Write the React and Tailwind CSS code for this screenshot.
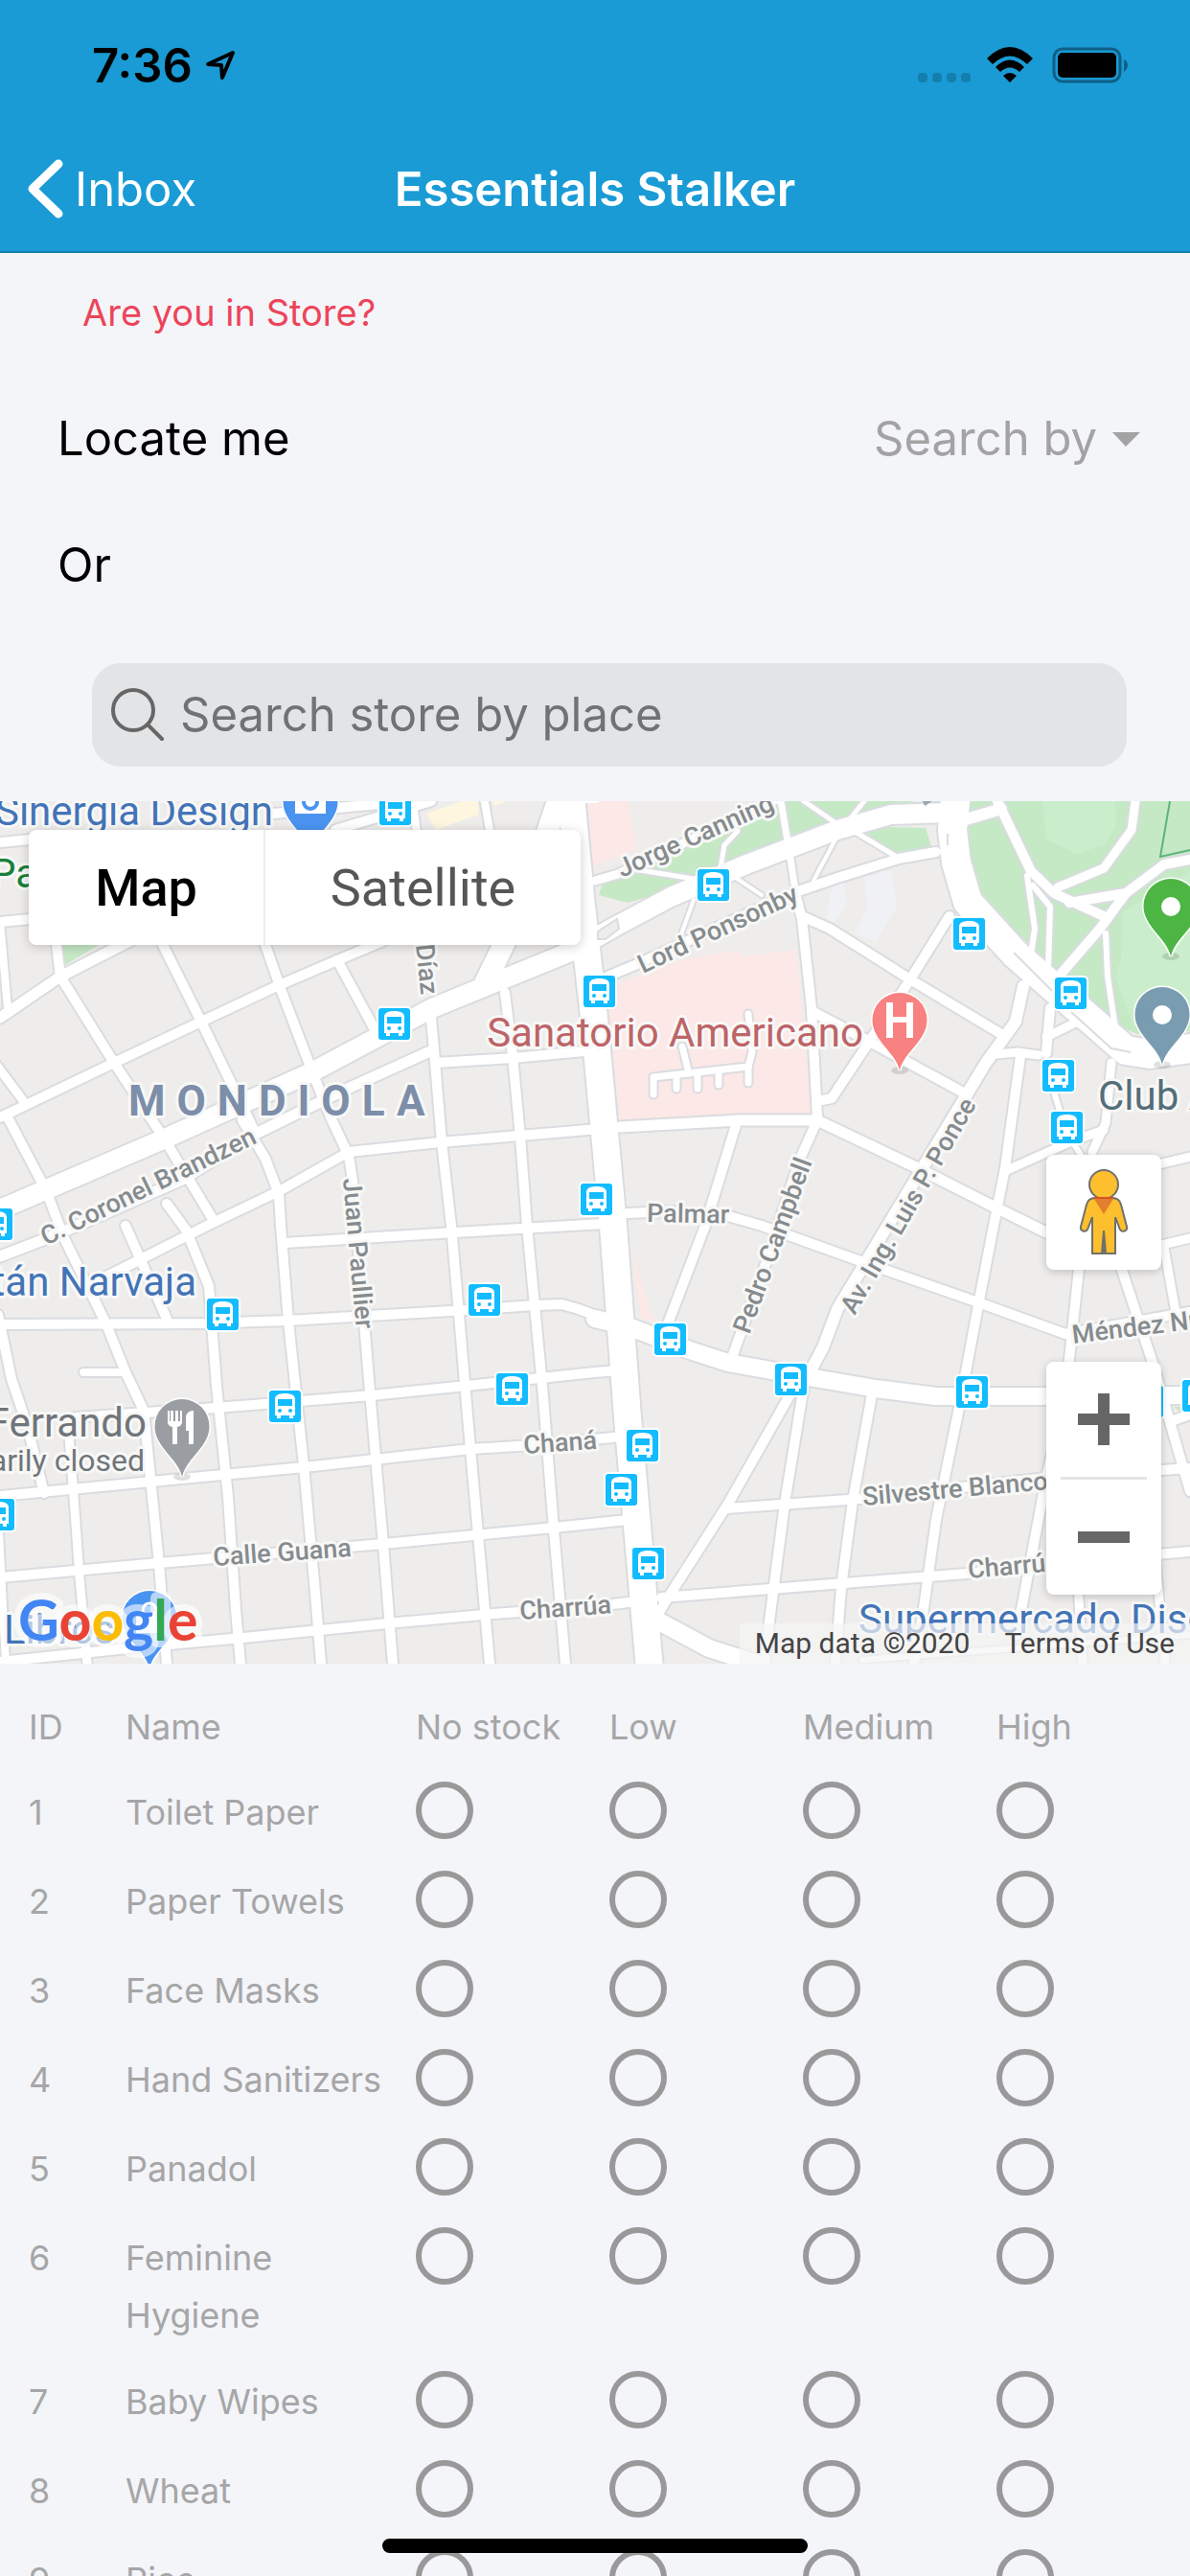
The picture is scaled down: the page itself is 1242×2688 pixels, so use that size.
import React, { useState } from 'react';

const items = [
  'Toilet Paper',
  'Paper Towels',
  'Face Masks',
  'Hand Sanitizers',
  'Panadol',
  'Feminine Hygiene',
  'Baby Wipes',
  'Wheat',
  'Rice'
];

const levels = ['No stock', 'Low', 'Medium', 'High'];

const areas = [
  // parks
  { fill: '#c5e8c5', points: '629,86 672,73 724,80 700,93 655,106 625,98' },
  { fill: '#c5e8c5', points: '672,67 750,33 815,0 955,0 926,8 874,24 780,62 731,82' },
  { fill: '#c5e8c5', points: '894,33 926,27 966,28 973,50 934,55' },
  { fill: '#c5e8c5', points: '975,0 997,0 997,17 975,17' },
  { fill: '#c5e8c5', points: '1013,0 1242,0 1242,240 1187,243 1164,233 1132,213 1100,176 1068,143 1017,100 1009,66 1007,33' },
  { fill: '#caeecb', points: '1088,0 1164,0 1165,26 1152,46 1124,55 1092,40' },
  { fill: '#caeecb', points: '1171,116 1242,73 1242,236 1183,236 1164,183 1170,165' },
  { fill: '#c5e8c5', points: '64,140 120,140 66,172' },
  { fill: '#c5e8c5', points: '1225,632 1240,632 1236,640' },
  // hospital blocks
  { fill: '#fce8e6', points: '645,190 708,166 770,156 775,162 831,155 847,326 783,326 647,333 635,216' },
  { fill: '#fce8e6', points: '614,0 655,0 665,50 618,68' },
  { fill: '#fce8e6', points: '659,466 682,543 669,540' },
  // others
  { fill: '#fef6de', points: '445,13 499,-6 499,14 455,30' },
  { fill: '#fef6de', points: '514,0 528,0 516,5' },
  { fill: '#eff1f4', points: '868,90 880,84 884,108 872,126 862,124' },
  { fill: '#eff1f4', points: '902,80 930,72 936,110 914,147 892,138 905,112' }
];

// [width, points]
const roads = [
  // footpaths
  [5, '839,0 874,24'],
  [5, '894,33 934,57'],
  [5, '902,0 886,20'],
  [4, '874,36 849,83'],
  [5, '770,31 756,46 752,70'],
  [5, '668,72 730,82'],
  [4, '768,80 795,98'],
  [4, '724,103 712,136'],
  [6, '1072,78 1080,133 1076,160'],
  [6, '1078,88 1096,110 1094,175'],
  [6, '1154,138 1156,183 1164,236'],
  [6, '1100,303 1112,343 1132,376'],
  [7, '815,0 825,60 831,100'],
  // park roads
  [10, '1041,0 1076,73 1100,96 1156,122'],
  [9, '1185,0 1181,30 1152,70 1104,90'],
  [10, '1242,61 1215,66 1175,96 1116,106'],
  [10, '1175,96 1148,133 1104,184'],
  [12, '1005,20 1045,8'],
  // streets east of the avenue
  [9, '621,83 645,76 815,-4'],
  [10, '629,185 665,170 827,96 874,80 938,60 977,53'],
  [10, '831,100 837,123 847,216 853,330'],
  [10, '837,120 866,133 950,186 1045,243'],
  [10, '991,120 950,186 906,253 868,310 853,313'],
  [10, '849,220 906,250 1009,306'],
  [12, '1068,193 1060,230 1029,273 1009,306 874,530 859,570 843,600'],
  [10, '827,615 760,733 696,833 680,860'],
  [9, '1040,264 1062,262 1084,265'],
  [10, '1096,216 1092,263'],
  [9, '1092,246 1125,230'],
  [10, '1065,266 1049,383 1037,443 1021,526 1001,633 977,750 962,856 954,900'],
  [9, '1160,273 1154,336 1140,366'],
  [9, '1049,386 1116,356 1152,343'],
  [11, '647,340 771,333 853,333'],
  [10, '768,338 736,443 696,548'],
  [10, '853,333 835,373 800,480 762,586'],
  [11, '853,333 958,383 1037,423 1092,450'],
  [10, '655,430 700,428 760,433 795,443 898,480 1021,523 1112,556 1242,533'],
  [9, '1130,398 1242,371'],
  [9, '1200,466 1242,456'],
  [9, '1215,466 1227,533'],
  [10, '1130,450 1112,620 1092,706 1061,870'],
  [10, '1158,450 1203,586 1242,720'],
  [10, '911,613 890,730 878,820 872,900'],
  [10, '839,610 819,733 803,856 798,900'],
  [10, '760,738 898,728 1092,706 1242,696'],
  [10, '690,831 1009,806 1092,796 1242,783'],
  [10, '1242,640 1225,646'],
  [9, '1124,800 1130,900'],
  [9, '1203,760 1216,900'],
  [6, '900,896 1242,870'],
  [18, '686,855 740,884 790,900'],
  // western grid, north to south
  [10, '253,333 277,373 291,410 293,443 301,543 317,693 329,826 335,900'],
  [10, '174,420 194,447 218,506 226,610 238,726 246,843 251,900'],
  [10, '131,443 174,540'],
  [10, '277,150 293,196 325,280 345,330 364,370 368,396 380,543 386,616 400,776 410,900'],
  [10, '449,216 453,260 461,356 471,443 491,676 511,900'],
  [10, '527,200 535,266 543,350 550,443 566,610 578,760 590,900'],
  [10, '8,330 48,406 67,456 111,546 131,596 150,636 158,716 166,796 174,900'],
  [9, '71,650 77,726 83,810 91,900'],
  [10, '-2,536 12,603 28,650 46,722'],
  [8, '-1,763 6,900'],
  [8, '87,596 127,596'],
  [10, '59,150 63,183 119,273 170,350 222,436'],
  [10, '170,150 210,230 265,343'],
  [10, '352,166 392,240'],
  [9, '-4,275 26,315'],
  [8, '0,126 8,216'],
  // western grid, west to east
  [10, '0,546 214,545 300,542 487,531 558,526 586,525 604,530 640,544'],
  [10, '297,461 475,450 630,441'],
  [10, '364,366 459,356 625,342'],
  [10, '455,273 535,268 620,260'],
  [10, '79,643 226,633 388,620 487,610 621,596 645,594'],
  [10, '0,725 158,710 317,695 491,676 555,672 650,663'],
  [10, '0,810 166,795 400,775 578,758 655,750'],
  [10, '0,898 143,883 253,873 404,858 515,848 621,840 665,835'],
  [11, '451,260 356,303 269,346 190,395 60,452 0,475'],
  [10, '364,366 293,406 222,440 190,456 143,480 107,498'],
  [11, '0,226 63,183 135,146'],
  [10, '0,330 119,273 210,230 289,193 352,166 400,146'],
  [10, '0,43 32,40'],
  [10, '0,126 32,123'],
  [10, '285,13 396,3'],
  [10, '350,30 450,0'],
  [8, '505,-4 511,30'],
  [8, '432,10 436,40'],
  // hospital driveways
  [7, '682,306 682,288 781,277 785,262 781,222'],
  [7, '706,286 706,300'],
  [7, '728,284 728,300'],
  [7, '750,282 750,296'],
  [7, '781,277 781,294'],
  [7, '719,284 712,256'],
  // avenues
  [20, '0,426 170,353 325,283 451,216 598,156 640,132 700,100 779,66 874,30 930,14 989,12'],
  [22, '506,190 545,110 582,0'],
  [18, '621,540 661,550 720,573 760,586 827,598 914,613 977,621 1092,621 1242,620'],
  [28, '596,-6 606,100 619,216 640,443 655,643 668,790 678,906'],
  [30, '998,-8 994,30 998,64 1010,105 1060,160 1136,226 1175,260 1200,264 1242,258']
];

const stops = [
  [608, -17], [412, 8], [411, 232], [-4, 441], [744, 87], [1011, 138], [1117, 200],
  [625, 198], [1104, 286], [1113, 340], [622, 415], [232, 535], [505, 520], [297, 631],
  [534, 613], [-2, 744], [699, 561], [825, 603], [1014, 616], [670, 672], [648, 718],
  [676, 795], [1197, 626], [1250, 620]
];

// street names: [text, x, y, angle]
const streets = [
  ['Jorge Canning', 649, 80, -24],
  ['Lord Ponsonby', 671, 180, -25],
  ['C. Coronel Brandzen', 48, 464, -26],
  ['Díaz', 434, 150, 84],
  ['Juan Paullier', 358, 394, 85],
  ['Palmar', 675, 439, 1],
  ['Pedro Campbell', 782, 557, -70],
  ['Av. Ing. Luis P. Ponce', 892, 537, -60],
  ['Méndez Núñez', 1120, 566, -7],
  ['Silvestre Blanco', 901, 735, -5],
  ['Charrúa', 1011, 811, -5],
  ['Chaná', 547, 681, -4],
  ['Calle Guana', 223, 798, -4],
  ['Charrúa', 543, 854, -4]
];

const PIN = 'M0 81C-4 62-28.5 50-28.5 28.5a28.5 28.5 0 1 1 57 0C28.5 50 4 62 0 81Z';

const Pin = ({ x, y, color, children }) => (
  <g transform={`translate(${x} ${y})`}>
    <ellipse cx="0" cy="81" rx="9" ry="4" fill="#000" opacity="0.12" />
    <path d={PIN} fill={color} stroke="#fff" strokeWidth="3" className="[paint-order:stroke]" />
    {children}
  </g>
);

const BusStop = ({ x, y }) => (
  <g transform={`translate(${x - 16} ${y - 16})`}>
    <rect x="-2" y="-2" width="37" height="37" rx="5" fill="#fff" />
    <rect width="33" height="33" rx="3" fill="#12bcff" />
    <path d="M6 9c0-4 4-6 10.500-6S27 5 27 9v17h-2v3h-4v-3h-9v3H8v-3H6Z" fill="#fff" />
    <path d="M9 9h15v7H9Z" fill="#12bcff" />
    <circle cx="11" cy="21" r="2" fill="#12bcff" />
    <circle cx="22" cy="21" r="2" fill="#12bcff" />
  </g>
);

const StreetMap = () => (
  <svg
    viewBox="0 0 1242 900"
    preserveAspectRatio="xMidYMid slice"
    className="block w-full h-full font-[Roboto,sans-serif]"
    role="img"
    aria-label="Map of nearby stores"
  >
    <rect width="1242" height="900" fill="#eeedeb" />
    {areas.map((area, i) => (
      <polygon key={i} points={area.points} fill={area.fill} />
    ))}
    <g fill="none" stroke="#dadce0" strokeLinejoin="round" strokeLinecap="round">
      {roads.map(([width, points], i) => (
        <polyline key={i} points={points} strokeWidth={width + 4} />
      ))}
    </g>
    <g fill="none" stroke="#fff" strokeLinejoin="round" strokeLinecap="round">
      {roads.map(([width, points], i) => (
        <polyline key={i} points={points} strokeWidth={width} />
      ))}
    </g>
    <path d="M624 136l20-13 2 10-14 11-8 0Z" fill="#eeedeb" stroke="#dadce0" strokeWidth="2" />
    <path d="M1058 158l40 40M1118 220l42 38 20 4M989 34v12" fill="none" stroke="#dadce0" strokeWidth="2" />
    <path d="M1221 0l-10 58 31-7" fill="none" stroke="#5bb57a" strokeWidth="2" />
    <path d="M963 0h10l-8 5Z" fill="#9aa5b1" />

    {stops.map(([x, y], i) => (
      <BusStop key={i} x={x} y={y} />
    ))}

    {/* Labels */}
    <g stroke="#f8f8f7" strokeWidth="6" strokeLinejoin="round" className="[paint-order:stroke]">
      <g fill="#868b8e" fontSize="27" fontWeight="500">
        {streets.map(([text, x, y, angle], i) => (
          <text key={i} transform={`translate(${x} ${y}) rotate(${angle})`}>{text}</text>
        ))}
      </g>
      <text x="134" y="328" fontSize="44" fontWeight="700" fill="#7c8ea8" className="tracking-[12px]">MONDIOLA</text>
      <g fontSize="42">
        <text x="285" y="25" textAnchor="end" fill="#4374b7">Sinergia Design</text>
        <text x="-10" y="90" fill="#188038">Parque</text>
        <text x="901" y="256" textAnchor="end" fill="#bd6468">Sanatorio Americano</text>
        <text x="1146" y="322" fill="#546e7a">Club Atlético</text>
        <text x="205" y="516" textAnchor="end" fill="#4374b7">Tristán Narvaja</text>
        <text x="153" y="663" textAnchor="end" fill="#70757a">Ferrando</text>
        <text x="896" y="868" fill="#4374b7">Supermercado Disco</text>
        <text x="4" y="879" fill="#4374b7">Libros</text>
      </g>
      <text x="151" y="699" textAnchor="end" fontSize="32" fill="#70757a">Temporarily closed</text>
    </g>

    {/* Places */}
    <Pin x={324} y={-28} color="#4a94f0">
      <rect x="-16" y="16" width="32" height="25" fill="#fff" />
      <circle cx="0" cy="29" r="7" fill="none" stroke="#4a94f0" strokeWidth="4" />
    </Pin>
    <Pin x={939} y={200} color="#f88181">
      <path d="M-14 10h7v15H7V10h7v37H7V31H-7v16h-7Z" fill="#fff" />
    </Pin>
    <Pin x={1222} y={81} color="#4cb543">
      <circle cx="0" cy="29" r="10" fill="#fff" />
    </Pin>
    <Pin x={1213} y={194} color="#7a9cb1">
      <circle cx="0" cy="29" r="10" fill="#fff" />
    </Pin>
    <Pin x={190} y={624} color="#9a9da2">
      <path d="M-15 12v12q0 4 5 5v18h5V29q5-1 5-5V12h-2v11h-2V12h-3v11h-2V12h-3v11h-1V12ZM4 33V20q0-8 8-8v35H7V33Z" fill="#fff" />
    </Pin>
    <Pin x={156} y={824} color="#4a94f0">
      <path d="M-7 22q0-9 7-9t7 9" fill="none" stroke="#fff" strokeWidth="3" />
      <path d="M-14 22h28v22h-28Z" fill="#fff" opacity="0.9" />
    </Pin>

    <g fontSize="59" fontWeight="700" className="font-[Lato,sans-serif]">
      <text x="19" y="876" fill="none" stroke="#fff" strokeOpacity="0.6" strokeWidth="14" strokeLinejoin="round" aria-hidden="true">Google</text>
      <text x="19" y="876">
        <tspan fill="#4285f4">G</tspan>
        <tspan fill="#ea4335">o</tspan>
        <tspan fill="#fbbc05">o</tspan>
        <tspan fill="#4285f4">g</tspan>
        <tspan fill="#34a853">l</tspan>
        <tspan fill="#ea4335">e</tspan>
      </text>
    </g>
  </svg>
);

const Pegman = () => (
  <svg viewBox="0 0 52 92" className="w-[52px] h-[92px]" aria-hidden="true">
    <path
      d="M17 31h18c6 0 8 3 9 7l6 23c1 5-5 6-7 3l-5-13v38H14V51L9 64c-2 3-8 2-7-3l6-23c1-4 3-7 9-7Z"
      fill="#fdbf2d" stroke="#70706c" strokeWidth="2"
    />
    <path d="M25 65h2l2 24h-6Z" fill="#70706c" />
    <circle cx="26" cy="17" r="15" fill="#fdbf2d" stroke="#70706c" strokeWidth="2" />
    <path d="M16 32h20L26 48Z" fill="#e07f2e" />
    <path d="M16 31h20" stroke="#d95427" strokeWidth="2" />
  </svg>
);

const StatusBar = () => (
  <div className="flex items-center justify-between h-33 pt-1 pl-24 pr-16 text-black">
    <div className="flex items-center gap-3">
      <span className="text-[49px] leading-none font-semibold">7:36</span>
      <svg viewBox="0 0 34 34" className="w-[34px] h-[34px]" aria-label="Location in use">
        <path d="M30 4 4 16l14 1 1 13Z" fill="none" stroke="#000" strokeWidth="4" strokeLinejoin="round" />
      </svg>
    </div>
    <div className="flex items-center">
      <svg viewBox="0 0 56 38" className="w-[56px] h-[38px] mr-4" aria-label="No signal">
        {[0, 15, 30, 45].map(x => (
          <rect key={x} x={x} y="27" width="10" height="10" rx="4" fill="#137fae" />
        ))}
      </svg>
      <svg viewBox="0 0 48 38" className="w-[48px] h-[38px] mr-5" aria-label="Wi-Fi">
        <path d="M0 12q24-24 48 0l-6 6q-18-17-36 0ZM9 21q15-15 30 0l-5 5q-10-9-20 0ZM17 30q7-6 14 0l-7 7Z" fill="#000" />
      </svg>
      <svg viewBox="0 0 80 38" className="w-[80px] h-[38px]" aria-label="Battery full">
        <rect x="2" y="2" width="69" height="34" rx="9" fill="none" stroke="#0f5f86" strokeWidth="3" />
        <rect x="6" y="6" width="61" height="26" rx="5" fill="#000" />
        <path d="M75 13q4 2 4 6t-4 7Z" fill="#0f5f86" />
      </svg>
    </div>
  </div>
);

const App = () => {
  const [place, setPlace] = useState('');
  const [mapType, setMapType] = useState('map');
  const [stock, setStock] = useState({});

  return (
    <div className="relative h-screen overflow-hidden bg-[#f4f5f9] text-black font-[Inter,'Open_Sans',sans-serif]">
      {/* Header */}
      <header className="bg-[#1a9bd5] border-b-2 border-[#1580b0]">
        <StatusBar />
        <div className="grid grid-cols-[1fr_auto_1fr] items-center h-[130px] pl-7 pr-7 text-white">
          <button className="flex items-center gap-3 justify-self-start text-[49px] leading-none">
            <svg viewBox="0 0 38 64" className="w-[38px] h-[64px]" aria-hidden="true">
              <path d="M33 6 6 32l27 26" fill="none" stroke="#fff" strokeWidth="9" strokeLinecap="round" strokeLinejoin="round" />
            </svg>
            Inbox
          </button>
          <h1 className="text-[49px] leading-none font-semibold">Essentials Stalker</h1>
        </div>
      </header>

      {/* Store lookup */}
      <section>
        <p className="pt-8 pl-[86px] text-[38px] leading-[60px] text-[#ec445a]">Are you in Store?</p>
        <div className="flex items-center justify-between h-33 mt-9 pl-15 pr-13">
          <button className="text-[49px] leading-[60px]">Locate me</button>
          <div className="flex items-center gap-4 text-[#a3a3a4]">
            <select aria-label="Search by" className="appearance-none bg-transparent text-[49px] leading-[60px]" defaultValue="">
              <option value="">Search by</option>
            </select>
            <svg viewBox="0 0 29 15" className="w-[29px] h-[15px]" aria-hidden="true">
              <path d="M0 0h29L14 15Z" fill="#a3a3a4" />
            </svg>
          </div>
        </div>
        <p className="flex items-center h-33 pl-15 text-[49px] leading-[60px]">Or</p>
        <label className="flex items-center gap-4 h-[108px] mt-9 mb-9 ml-24 mr-[66px] pl-5 rounded-[30px] bg-[#e2e4e6]">
          <svg viewBox="0 0 56 56" className="w-[56px] h-[56px] shrink-0" aria-hidden="true">
            <circle cx="23" cy="23" r="21" fill="none" stroke="#666" strokeWidth="4" />
            <path d="m38 38 15 15" stroke="#666" strokeWidth="4" strokeLinecap="round" />
          </svg>
          <input
            type="search"
            value={place}
            onChange={(e) => setPlace(e.target.value)}
            placeholder="Search store by place"
            aria-label="Search store by place"
            className="flex-1 min-w-0 bg-transparent outline-none text-[49px] leading-[60px] placeholder:text-[#717274]"
          />
        </label>
      </section>

      {/* Map */}
      <section className="relative h-[900px] overflow-hidden font-[Roboto,sans-serif]">
        <StreetMap />
        <div className="absolute top-[30px] left-[30px] flex h-30 rounded-lg bg-white shadow-[0_2px_12px_rgba(0,0,0,0.2)] text-[54px]">
          <button
            onClick={() => setMapType('map')}
            className={`w-[245px] ${mapType === 'map' ? 'font-medium text-black' : 'text-[#565656]'}`}
          >
            Map
          </button>
          <button
            onClick={() => setMapType('satellite')}
            className={`w-[331px] border-l-2 border-[#ececec] ${mapType === 'satellite' ? 'font-medium text-black' : 'text-[#565656]'}`}
          >
            Satellite
          </button>
        </div>

        <button aria-label="Street View" className="absolute top-[369px] right-[30px] flex items-center justify-center w-30 h-30 rounded-lg bg-white shadow-[0_2px_10px_rgba(0,0,0,0.2)]">
          <Pegman />
        </button>

        <div className="absolute top-[585px] right-[30px] flex flex-col items-center w-30 rounded-lg bg-white shadow-[0_2px_10px_rgba(0,0,0,0.2)]">
          <button aria-label="Zoom in" className="flex items-center justify-center w-30 h-30">
            <svg viewBox="0 0 54 54" className="w-[54px] h-[54px]" aria-hidden="true">
              <path d="M21 0h12v21h21v12H33v21H21V33H0V21h21Z" fill="#666" />
            </svg>
          </button>
          <div className="w-[90px] h-[3px] bg-[#e6e6e6]" />
          <button aria-label="Zoom out" className="flex items-center justify-center w-30 h-30">
            <svg viewBox="0 0 54 12" className="w-[54px] h-[12px]" aria-hidden="true">
              <path d="M0 0h54v12H0Z" fill="#666" />
            </svg>
          </button>
        </div>

        <div className="absolute bottom-0 right-0 flex h-[42px] text-[30px] leading-[42px] text-[#444]">
          <span className="px-4 bg-[#f5f5f5]/70">Map data ©2020</span>
          <a href="#terms" className="pl-5 pr-4 bg-[#f5f5f5]/70">Terms of Use</a>
        </div>
      </section>

      {/* Stock table */}
      <table className="w-full table-fixed text-left align-top text-[36px] leading-[60px] text-[#a6a6a7]">
        <thead>
          <tr className="h-[107px] align-top">
            <th className="w-[131px] pt-9 pl-[30px] font-normal">ID</th>
            <th className="w-[303px] pt-9 font-normal">Name</th>
            {levels.map(level => (
              <th key={level} className="pt-9 font-normal whitespace-nowrap">{level}</th>
            ))}
          </tr>
        </thead>
        <tbody>
          {items.map((item, index) => (
            <tr key={item} className="h-[93px] align-top">
              <td className="pt-[18px] pb-3 pl-[30px]">{index + 1}</td>
              <td className="pt-[18px] pb-3 pr-8">{item}</td>
              {levels.map(level => (
                <td key={level} className="pt-4">
                  <input
                    type="radio"
                    name={`item-${index}`}
                    aria-label={`${item}: ${level}`}
                    checked={stock[item] === level}
                    onChange={() => setStock(prev => ({ ...prev, [item]: level }))}
                    className="block appearance-none w-15 h-15 rounded-full border-6 border-[#999] checked:bg-[#1a9bd5]"
                  />
                </td>
              ))}
            </tr>
          ))}
        </tbody>
      </table>

      {/* Home indicator */}
      <div className="absolute bottom-6 inset-x-0 mx-auto w-[444px] h-[15px] rounded-full bg-black" />
    </div>
  );
};

export default App;
